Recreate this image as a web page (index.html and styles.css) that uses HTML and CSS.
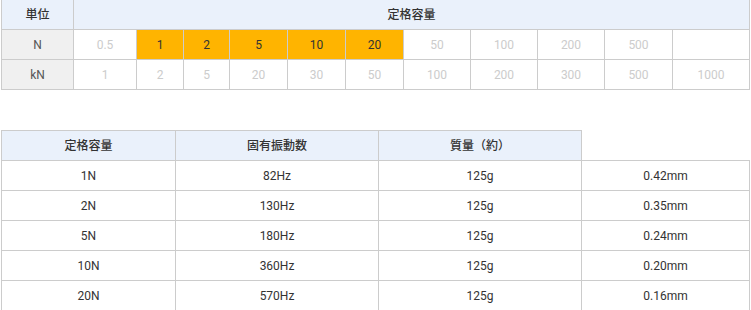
FILE: index.html
```html
<!DOCTYPE html>
<html lang="ja">
<head>
<meta charset="utf-8">
<link rel="stylesheet" href="styles.css">
</head>
<body>
<div class="page">
<table class="spec range">
  <colgroup>
    <col style="width:72px"><col style="width:63px"><col style="width:47px"><col style="width:46px"><col style="width:58px"><col style="width:58px"><col style="width:58px"><col style="width:67px"><col style="width:67px"><col style="width:67px"><col style="width:68px"><col style="width:77px">
  </colgroup>
  <tr class="head">
    <th>単位</th>
    <th colspan="11">定格容量</th>
  </tr>
  <tr>
    <td class="label">N</td>
    <td class="off">0.5</td>
    <td class="on">1</td>
    <td class="on">2</td>
    <td class="on">5</td>
    <td class="on">10</td>
    <td class="on">20</td>
    <td class="off">50</td>
    <td class="off">100</td>
    <td class="off">200</td>
    <td class="off">500</td>
    <td class="off"></td>
  </tr>
  <tr>
    <td class="label">kN</td>
    <td class="off">1</td>
    <td class="off">2</td>
    <td class="off">5</td>
    <td class="off">20</td>
    <td class="off">30</td>
    <td class="off">50</td>
    <td class="off">100</td>
    <td class="off">200</td>
    <td class="off">300</td>
    <td class="off">500</td>
    <td class="off">1000</td>
  </tr>
</table>

<table class="spec detail">
  <colgroup>
    <col style="width:174px"><col style="width:203px"><col style="width:203px"><col style="width:168px">
  </colgroup>
  <tr class="head">
    <th>定格容量</th>
    <th>固有振動数</th>
    <th>質量（約）</th>
  </tr>
  <tr><td>1N</td><td>82Hz</td><td>125g</td><td>0.42mm</td></tr>
  <tr><td>2N</td><td>130Hz</td><td>125g</td><td>0.35mm</td></tr>
  <tr><td>5N</td><td>180Hz</td><td>125g</td><td>0.24mm</td></tr>
  <tr><td>10N</td><td>360Hz</td><td>125g</td><td>0.20mm</td></tr>
  <tr><td>20N</td><td>570Hz</td><td>125g</td><td>0.16mm</td></tr>
</table>
</div>
</body>
</html>
```

FILE: styles.css
```css
html, body {
  margin: 0;
  padding: 0;
  background: #fff;
}

body {
  font-family: Roboto, "Noto Sans CJK JP", sans-serif;
  font-size: 12px;
  color: #333;
}

.page {
  padding-left: 1px;
  margin-top: -1px;
}

.spec {
  border-collapse: collapse;
  table-layout: fixed;
  width: 749px;
}

.spec th,
.spec td {
  border: 1px solid #ccc;
  height: 29px;
  padding: 0;
  text-align: center;
  vertical-align: middle;
  line-height: 14px;
}

.spec th {
  background: #eaf1fb;
  font-weight: 500;
  color: #333;
}

.spec td.label {
  background: #f0f0f0;
  color: #555;
}

.spec td.off {
  color: #ccc;
}

.spec td.on {
  background: #ffb400;
  color: #333;
}

.detail {
  margin-top: 40px;
}
```
